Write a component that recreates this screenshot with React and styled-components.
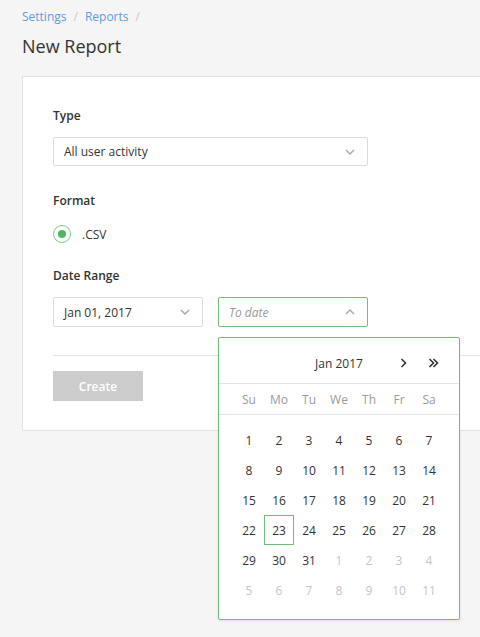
import React from "react";
import styled, { createGlobalStyle } from "styled-components";

const Global = createGlobalStyle`
  html, body { margin: 0; padding: 0; }
  body {
    background: #f5f5f5;
    font-family: "Open Sans", "Noto Sans", sans-serif;
    color: #333;
    min-height: 637px;
  }
`;

const Page = styled.div`
  padding: 8px 0 0 22px;
  width: 480px;
  box-sizing: border-box;
`;

const Crumbs = styled.nav`
  display: flex;
  gap: 7px;
  font-size: 12px;
  line-height: 18px;
`;
const Crumb = styled.a`
  color: #5b9be2;
  text-decoration: none;
`;
const Slash = styled.span`
  color: #c8c8c8;
`;

const Title = styled.h1`
  margin: 8px 0 18px;
  font-size: 18px;
  line-height: 24px;
  font-weight: 400;
  color: #333;
`;

const Card = styled.section`
  background: #fff;
  border: 1px solid #e2e2e2;
  border-right: 0;
  box-sizing: border-box;
  padding: 30px 0 29px 30px;
`;

const Field = styled.div`
  display: flex;
  flex-direction: column;
  gap: ${(p) => p.$gap || 12}px;
  margin-bottom: ${(p) => p.$mb || 0}px;
`;

const Label = styled.div`
  font-size: 12px;
  line-height: 18px;
  font-weight: 600;
  color: #333;
`;

const Select = styled.div`
  position: relative;
  display: flex;
  align-items: center;
  justify-content: space-between;
  box-sizing: border-box;
  width: ${(p) => p.$w}px;
  height: ${(p) => p.$h || 30}px;
  border: 1px solid ${(p) => (p.$active ? "#6fbd78" : "#dcdcdc")};
  border-radius: 2px;
  padding: 0 12px 0 10px;
  background: #fff;
  font-size: 12px;
  color: #333;
`;

const Placeholder = styled.span`
  font-style: italic;
  color: #999;
`;

const Chevron = ({ up }) => (
  <svg width="10" height="6" viewBox="0 0 10 6">
    <polyline
      points={up ? "1,5 5,1 9,5" : "1,1 5,5 9,1"}
      fill="none"
      stroke="#a5a5a5"
      strokeWidth="1.3"
    />
  </svg>
);

const RadioRow = styled.label`
  display: flex;
  align-items: center;
  gap: 11px;
  font-size: 12px;
  height: 18px;
  color: #333;
`;
const RadioRing = styled.span`
  width: 18px;
  height: 18px;
  box-sizing: border-box;
  border: 1.5px solid #7fc98d;
  border-radius: 50%;
  display: flex;
  align-items: center;
  justify-content: center;
  &::after {
    content: "";
    width: 8px;
    height: 8px;
    border-radius: 50%;
    background: #4cb861;
  }
`;

const DateRow = styled.div`
  display: flex;
  gap: 15px;
`;

const Divider = styled.hr`
  border: 0;
  border-top: 1px solid #e4e4e4;
  margin: 28px 0 15px;
`;

const Button = styled.button`
  width: 90px;
  height: 30px;
  border: 0;
  border-radius: 0;
  background: #cccccc;
  color: #fff;
  font-family: inherit;
  font-size: 12px;
  font-weight: 600;
  padding: 0;
`;

const Popup = styled.div`
  position: absolute;
  left: -1px;
  top: 39px;
  width: 242px;
  box-sizing: border-box;
  background: #fff;
  border: 1px solid #6fbd78;
  border-radius: 2px;
  box-shadow: 0 1px 3px rgba(0, 0, 0, 0.08);
  z-index: 5;
`;

const Grid = styled.div`
  display: grid;
  grid-template-columns: repeat(7, 30px);
  grid-auto-rows: 30px;
  padding: ${(p) => p.$pad || "0 15px"};
  border-bottom: ${(p) => (p.$line ? "1px solid #e6e6e6" : "0")};
  align-items: center;
  justify-items: center;
  font-size: 12px;
`;

const Header = styled(Grid)`
  grid-auto-rows: 40px;
  padding-top: 5px;
`;

const MonthTitle = styled.div`
  grid-column: 2 / 7;
  grid-row: 1;
  font-size: 12px;
  color: #333;
`;

const NavBtn = styled.div`
  grid-row: 1;
  grid-column: ${(p) => p.$col};
  padding-left: 8px;
  display: flex;
  align-items: center;
`;

const Weekday = styled.div`
  color: #9a9a9a;
`;

const Day = styled.div`
  width: 30px;
  height: 30px;
  box-sizing: border-box;
  display: flex;
  align-items: center;
  justify-content: center;
  color: ${(p) => (p.$muted ? "#c6c6c6" : "#333")};
  border: 1px solid ${(p) => (p.$selected ? "#6fbd78" : "transparent")};
`;

const Next = () => (
  <svg width="7" height="10" viewBox="0 0 7 10">
    <polyline points="1.5,1 5.5,5 1.5,9" fill="none" stroke="#333" strokeWidth="1.6" />
  </svg>
);
const Last = () => (
  <svg width="11" height="10" viewBox="0 0 11 10">
    <polyline points="1.5,1 5.5,5 1.5,9" fill="none" stroke="#333" strokeWidth="1.6" />
    <polyline points="5.5,1 9.5,5 5.5,9" fill="none" stroke="#333" strokeWidth="1.6" />
  </svg>
);

const weekdays = ["Su", "Mo", "Tu", "We", "Th", "Fr", "Sa"];
const days = [];
for (let i = 1; i <= 31; i++) days.push({ n: i });
for (let i = 1; i <= 11; i++) days.push({ n: i, muted: true });

export default function App() {
  return (
    <>
      <Global />
      <Page>
        <Crumbs>
          <Crumb href="#">Settings</Crumb>
          <Slash>/</Slash>
          <Crumb href="#">Reports</Crumb>
          <Slash>/</Slash>
        </Crumbs>
        <Title>New Report</Title>
        <Card>
          <Field $mb={26}>
            <Label>Type</Label>
            <Select $w={315} $h={29}>
              <span>All user activity</span>
              <Chevron />
            </Select>
          </Field>
          <Field $gap={15} $mb={24}>
            <Label>Format</Label>
            <RadioRow>
              <RadioRing />
              .CSV
            </RadioRow>
          </Field>
          <Field>
            <Label>Date Range</Label>
            <DateRow>
              <Select $w={150}>
                <span>Jan 01, 2017</span>
                <Chevron />
              </Select>
              <Select $w={150} $active>
                <Placeholder>To date</Placeholder>
                <Chevron up />
                <Popup>
                  <Header $line>
                    <MonthTitle>Jan 2017</MonthTitle>
                    <NavBtn $col={6}>
                      <Next />
                    </NavBtn>
                    <NavBtn $col={7}>
                      <Last />
                    </NavBtn>
                  </Header>
                  <Grid $line>
                    {weekdays.map((w) => (
                      <Weekday key={w}>{w}</Weekday>
                    ))}
                  </Grid>
                  <Grid $pad="10px 15px 14px">
                    {days.map((d, i) => (
                      <Day key={i} $muted={d.muted} $selected={!d.muted && d.n === 23}>
                        {d.n}
                      </Day>
                    ))}
                  </Grid>
                </Popup>
              </Select>
            </DateRow>
          </Field>
          <Divider />
          <Button>Create</Button>
        </Card>
      </Page>
    </>
  );
}
